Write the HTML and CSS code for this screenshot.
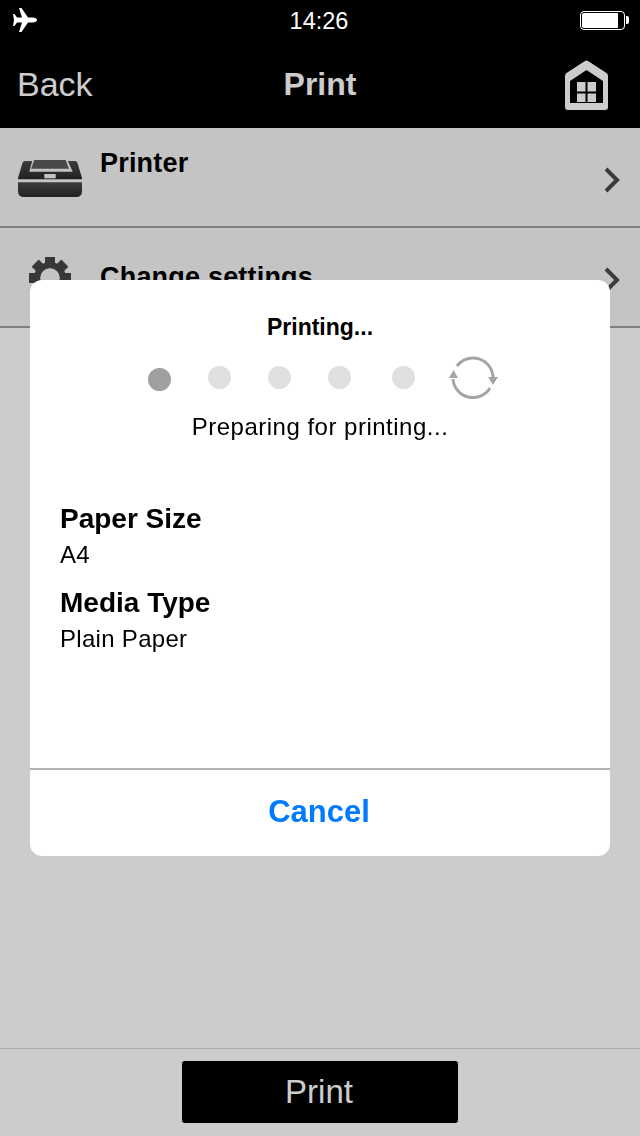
FILE: index.html
```html
<!DOCTYPE html>
<html lang="en">
<head>
	<meta charset="UTF-8">
	<meta name="viewport" content="width=device-width, initial-scale=1.0">
	<title>Print</title>
	<link rel="stylesheet" href="styles.css">
</head>
<body>
	<div class="app">
		<div class="status-bar">
			<svg class="plane" width="26" height="24" viewBox="0 0 26 24">
				<path d="M25 12c0-1.500-2-2.500-4-2.500h-5L9.500 0H7l3 9.500H5L2.500 6H1l1 6-1 6h1.500L5 14.500h5L7 24h2.500L16 14.500h5c2 0 4-1 4-2.500z"/>
			</svg>
			<div class="time">14:26</div>
			<div class="battery"><div class="battery-level"></div></div>
		</div>

		<div class="nav-bar">
			<div class="back">Back</div>
			<h1>Print</h1>
			<svg class="home" width="43" height="50" viewBox="0 0 43 50">
				<path fill-rule="evenodd" d="M20 1q1.500-1 3 0L41.500 13q1.500 1 1.500 3V47q0 3-3 3H3q-3 0-3-3V16q0-2 1.500-3zM21.500 10 5 21v22h33V21zM12 22h8.500v9.500H12zM22.500 22H31v9.500h-8.500zM12 33.500h8.500V42H12zM22.500 33.500H31V42h-8.500z"/>
			</svg>
		</div>

		<div class="list">
			<div class="row">
				<svg class="row-icon" width="64" height="40" viewBox="0 -1 64 40">
					<defs>
						<linearGradient id="body" x1="0" y1="0" x2="0" y2="1">
							<stop offset="0" stop-color="#4c4c4c"/>
							<stop offset="1" stop-color="#2a2a2a"/>
						</linearGradient>
					</defs>
					<path fill="url(#body)" d="M7 3h50q2 0 2.500 2L64 20v1.300H0V20L4.500 5Q5 3 7 3z"/>
					<path fill="#f5f5f5" d="M14.300 2.700h35.400l5 11H11.300z"/>
					<path fill="#5c5c5c" d="M16.300 2h31.400l3.300 8.700H13z"/>
					<rect x="26.300" y="16" width="11.400" height="4.300" fill="#f5f5f5"/>
					<path fill="url(#body)" d="M0 24.300h64V33q0 6-6 6H6q-6 0-6-6z"/>
				</svg>
				<div class="row-text">
					<div class="row-title">Printer</div>
					<div class="row-value"></div>
				</div>
				<svg class="chevron" width="16" height="26" viewBox="0 0 16 26"><path d="M2 2l11 11L2 24"/></svg>
			</div>
			<div class="row">
				<svg class="row-icon" width="64" height="44" viewBox="0 -1 64 44">
					<g fill="#474747">
						<rect x="27" y="1" width="10" height="42"/>
						<rect x="27" y="1" width="10" height="42" transform="rotate(45 32 22)"/>
						<rect x="27" y="1" width="10" height="42" transform="rotate(90 32 22)"/>
						<rect x="27" y="1" width="10" height="42" transform="rotate(135 32 22)"/>
					</g>
					<circle cx="32" cy="22" r="10" fill="#f5f5f5"/>
					<circle cx="32" cy="22" r="13" fill="none" stroke="#474747" stroke-width="6"/>
				</svg>
				<div class="row-text">
					<div class="row-title">Change settings</div>
				</div>
				<svg class="chevron" width="16" height="26" viewBox="0 0 16 26"><path d="M2 2l11 11L2 24"/></svg>
			</div>
		</div>

		<div class="bottom-bar">
			<div class="print-button">Print</div>
		</div>
	</div>

	<div class="overlay">
		<div class="dialog">
			<div class="dialog-body">
				<div class="dialog-title">Printing...</div>
				<div class="steps">
					<div class="dot active"></div>
					<div class="dot"></div>
					<div class="dot"></div>
					<div class="dot"></div>
					<div class="dot last"></div>
					<svg class="sync" width="50" height="44" viewBox="0 0 50 44">
						<path class="sync-arc" d="M8 10A20 20 0 0 1 44 21"/>
						<path class="sync-arc" d="M41 32A20 20 0 0 1 4 23"/>
						<path class="sync-head" d="M39 21h10l-5 8zM0 22h9L4.500 14z"/>
					</svg>
				</div>
				<div class="dialog-status">Preparing for printing...</div>
				<div class="info">
					<div class="info-label">Paper Size</div>
					<div class="info-value">A4</div>
					<div class="info-label">Media Type</div>
					<div class="info-value">Plain Paper</div>
				</div>
			</div>
			<div class="cancel">Cancel</div>
		</div>
	</div>
</body>
</html>
```

FILE: styles.css
```css
html, body { margin: 0; padding: 0; background-color: #fff; overflow: hidden; }
body { font-family: "Liberation Sans", Arial, sans-serif; color: #000; }
div { box-sizing: border-box; }

.app { display: flex; flex-direction: column; height: 1136px; }

/* status bar stays above the dim layer */
.status-bar {
	position: relative;
	z-index: 20;
	height: 40px;
	display: flex;
	align-items: center;
	justify-content: space-between;
	padding: 0 15px 0 12px;
	background-color: #000;
	color: #fff;
}
.plane { fill: #fff; }
.time {
	position: absolute;
	top: 7px;
	left: 0;
	right: 2px;
	text-align: center;
	font-size: 23.5px;
	line-height: 28px;
}
.battery {
	position: relative;
	width: 45px;
	height: 19px;
	border: 1px solid #fff;
	border-radius: 4px;
	padding: 1px;
}
.battery::after {
	content: "";
	position: absolute;
	top: 4px;
	right: -5px;
	width: 3px;
	height: 8px;
	background-color: #fff;
	border-radius: 0 2px 2px 0;
}
.battery-level { width: 36px; height: 100%; background-color: #fff; border-radius: 2px 0 0 2px; }

.nav-bar {
	height: 88px;
	display: flex;
	align-items: center;
	justify-content: space-between;
	position: relative;
	padding: 0 32px 0 17px;
	background-color: #000;
	color: #fff;
}
.back { font-size: 34px; }
.nav-bar h1 {
	position: absolute;
	left: 0;
	right: 0;
	margin: 0;
	text-align: center;
	font-size: 32px;
	font-weight: bold;
}
.home { fill: #fff; margin-top: 2px; }

.row {
	height: 100px;
	display: flex;
	align-items: center;
	padding: 0 20px 0 18px;
	background-color: #f5f5f5;
	border-bottom: 2px solid #a0a0a0;
}
.row-icon { flex: none; margin-right: 18px; }
.row-text { flex: 1; }
.row-title { font-size: 27px; line-height: 32px; font-weight: bold; letter-spacing: 0.2px; }
.row-value { height: 28px; }
.chevron { flex: none; margin-top: 6px; fill: none; stroke: #4a4a4a; stroke-width: 4; }

.bottom-bar {
	margin-top: auto;
	height: 88px;
	display: flex;
	justify-content: center;
	padding-top: 12px;
	border-top: 1px solid #d4d4d4;
}
.print-button {
	width: 276px;
	height: 62px;
	display: flex;
	align-items: center;
	justify-content: center;
	padding-right: 2px;
	background-color: #000;
	color: #fff;
	border-radius: 3px;
	font-size: 33px;
}

.overlay {
	position: fixed;
	top: 0;
	bottom: 0;
	left: 0;
	right: 0;
	z-index: 10;
	display: flex;
	align-items: center;
	justify-content: center;
	background: rgba(0, 0, 0, 0.2);
}
.dialog {
	width: 580px;
	height: 576px;
	display: flex;
	flex-direction: column;
	background-color: #fff;
	border-radius: 12px;
}
.dialog-body { flex: 1; padding: 34px 30px 0 30px; }
.dialog-title { text-align: center; font-size: 23px; line-height: 27px; font-weight: bold; }

.steps { display: flex; align-items: flex-start; margin: 15px 0 0 88px; }
.dot { width: 23px; height: 23px; margin: 10px 37px 0 0; border-radius: 50%; background-color: #e0e0e0; }
.dot.active { margin-top: 12px; background-color: #a0a0a0; }
.dot.last { margin-left: 4px; margin-right: 34px; }
.sync { flex: none; }
.sync-arc { fill: none; stroke: #a5a5a5; stroke-width: 3; }
.sync-head { fill: #a5a5a5; }

.dialog-status { margin-top: 13px; text-align: center; font-size: 24px; line-height: 28px; letter-spacing: 0.5px; }

.info { margin-top: 62px; }
.info-label { font-size: 28px; line-height: 32px; font-weight: bold; }
.info-value { font-size: 24px; line-height: 28px; margin: 6px 0 18px 0; letter-spacing: 0.3px; }

.cancel {
	height: 88px;
	display: flex;
	align-items: center;
	justify-content: center;
	padding: 0 2px 2px 0;
	border-top: 2px solid #b2b2b2;
	color: #007aff;
	font-size: 31px;
	font-weight: bold;
}
```
